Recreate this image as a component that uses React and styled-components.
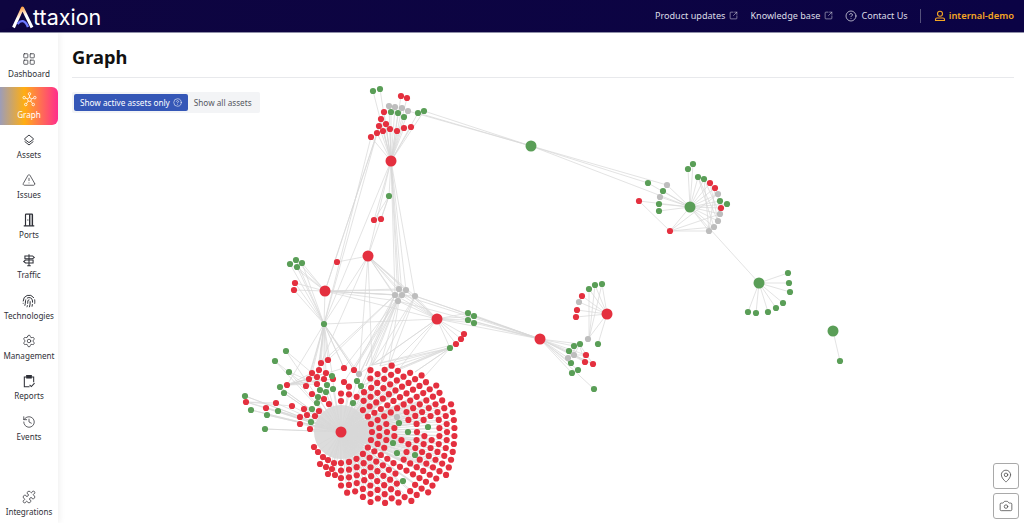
import React from 'react';
import styled, { createGlobalStyle } from 'styled-components';
import {
  LayoutGrid, TriangleAlert, Fingerprint, Settings,
  History, Puzzle, SquareArrowOutUpRight, CircleHelp, MapPin, Camera,
} from 'lucide-react';

const GlobalStyle = createGlobalStyle`
  html, body {
    margin: 0;
    padding: 0;
    height: 100%;
    background: #fff;
    font-family: "Noto Sans", "Liberation Sans", sans-serif;
  }
  #root { height: 100%; }
`;

const Page = styled.div`
  display: flex;
  flex-direction: column;
  width: 1024px;
  height: 523px;
  overflow: hidden;
`;

const Header = styled.header`
  display: flex;
  align-items: center;
  justify-content: space-between;
  flex: 0 0 33px;
  box-sizing: border-box;
  padding: 0 10px 1px 12px;
  background: linear-gradient(90deg, #0e0540, #0b0345);
  border-bottom: 1px solid #8f8fa8;
`;

const Logo = styled.div`
  display: flex;
  align-items: flex-end;
  height: 24px;
  margin-top: 2px;
  color: #fff;
`;

const LogoText = styled.span`
  font-family: "Inter", "Liberation Sans", sans-serif;
  font-size: 21.5px;
  line-height: 24px;
  margin-left: -1px;
`;

const TopNav = styled.nav`
  display: flex;
  align-items: center;
`;

const TopLink = styled.a`
  display: flex;
  align-items: center;
  gap: 4px;
  margin-right: ${(p) => p.$gap || 12}px;
  font-size: 9.1px;
  color: #dcdce6;
  white-space: nowrap;
`;

const Divider = styled.span`
  width: 1px;
  height: 14px;
  margin: 0 13px 0 11px;
  background: #55517c;
`;

const UserLink = styled.a`
  display: flex;
  align-items: center;
  gap: 3px;
  font-size: 9.4px;
  font-weight: 600;
  color: #f5a623;
`;

const Body = styled.div`
  display: flex;
  flex: 1;
  min-height: 0;
`;

const Sidebar = styled.aside`
  display: flex;
  flex-direction: column;
  align-items: stretch;
  flex: 0 0 58px;
  box-sizing: border-box;
  padding: 14px 0 0;
  background: #fff;
  box-shadow: 2px 0 6px rgba(0, 0, 0, 0.06);
  z-index: 1;
`;

const NavItem = styled.a`
  display: flex;
  flex-direction: column;
  align-items: center;
  justify-content: center;
  flex: 0 0 38px;
  margin-bottom: ${(p) => (p.$bottom ? '0' : '2.3px')};
  margin-top: ${(p) => (p.$bottom ? 'auto' : '0')};
  font-size: 8.1px;
  line-height: 12px;
  color: ${(p) => (p.$active ? '#fff' : '#2f3138')};
  border-radius: 0 6px 6px 0;
  background: ${(p) => (p.$active ? 'linear-gradient(90deg, #9d9db8 0%, #ffae12 42%, #ff8a3c 58%, #ff2d8c 100%)' : 'none')};
  svg { margin-bottom: 2px; }
`;

const Main = styled.main`
  position: relative;
  flex: 1;
  min-width: 0;
  box-sizing: border-box;
  padding: 0 10px 0 14px;
`;

const TitleBar = styled.div`
  height: 44px;
  border-bottom: 1px solid #e8e9ec;
`;

const Title = styled.h1`
  margin: 0;
  padding-top: 9px;
  font-size: 18.3px;
  line-height: 30px;
  font-weight: 700;
  color: #111;
`;

const Toggle = styled.div`
  position: relative;
  z-index: 1;
  display: inline-flex;
  align-items: center;
  margin-top: 14px;
  padding: 2px;
  height: 21px;
  box-sizing: border-box;
  background: #f3f4f6;
  border-radius: 2px;
`;

const ToggleButton = styled.button`
  display: flex;
  align-items: center;
  gap: 3px;
  height: 17px;
  padding: 0 6px;
  border: none;
  border-radius: 2px;
  font-family: inherit;
  font-size: 8.2px;
  color: ${(p) => (p.$active ? '#fff' : '#55585f')};
  background: ${(p) => (p.$active ? '#3557b7' : 'transparent')};
`;

const GraphCanvas = styled.svg`
  position: absolute;
  left: 0;
  top: 0;
  width: 966px;
  height: 490px;
`;

const MapTools = styled.div`
  position: absolute;
  right: 5px;
  bottom: 4px;
  display: flex;
  flex-direction: column;
  gap: 4px;
`;

const MapTool = styled.button`
  display: flex;
  align-items: center;
  justify-content: center;
  width: 26px;
  height: 26px;
  padding: 0;
  background: #fff;
  border: 1px solid #a9a9a9;
  border-radius: 3px;
  color: #444;
`;

const RED = '#e4303f';
const GREEN = '#5a9e57';
const GREY = '#bdbdbd';

const topReds = [[401,96],[407,98],[384,112],[381,119],[379,126],[386,124],[377,133],[371,137],[383,131],[390,129],[397,131],[404,128],[411,127]];
const topGreens = [[373,91],[380,89],[391,112],[398,113],[404,117],[418,113],[424,111]];
const topGreys = [[389,106],[395,107],[402,108],[408,111]];

const rightReds = [[710,183],[715,188],[721,208],[670,231],[639,201]];
const rightGreens = [[693,164],[688,169],[698,177],[704,179],[720,201],[727,204],[648,183],[663,191],[659,204],[659,211]];
const rightGreys = [[718,194],[720,214],[718,221],[714,227],[709,231],[667,185],[660,197]];

const fanGreens = [[788,273],[789,283],[790,292],[783,303],[776,308],[768,312],[756,313],[748,312]];

const midGreys = [[399,289],[406,290],[395,295],[402,295],[398,301],[415,296]];
const leftTopGreens = [[290,264],[296,260],[302,263],[297,267]];
const leftTopReds = [[295,283],[294,290]];
const midGreens = [[468,313],[474,316],[468,320],[474,323],[450,348]];
const midReds = [[464,334],[461,339],[456,344]];

const lowerA = [[602,284],[595,285],[589,289],[598,344]];
const lowerARed = [[582,296],[577,310],[576,317]];
const lowerAGrey = [[579,302],[588,339]];
const lowerB = [[580,344],[574,346],[569,351],[571,363],[578,370],[572,373],[594,389]];
const lowerBRed = [[586,355],[585,362],[593,364]];
const lowerBGrey = [[574,355],[568,358]];

const leftGreens = [[286,351],[275,361],[289,372],[280,387],[284,393],[245,396],[251,410],[267,415],[278,411],[265,429],[332,376],[327,385],[320,390],[326,392],[333,389],[318,397],[317,403],[312,409],[311,422],[353,403],[357,381],[361,386]];
const leftReds = [[321,363],[328,360],[344,368],[354,370],[312,373],[319,370],[326,373],[317,377],[309,379],[324,379],[333,379],[306,386],[317,384],[287,385],[344,382],[312,394],[324,399],[329,404],[266,408],[246,402],[276,403],[292,406],[304,409],[307,415],[300,417],[315,416],[319,411],[300,424],[310,429],[314,447],[318,452],[323,457],[328,460],[320,464],[326,467],[334,463],[332,469],[328,474],[335,475]];
const clusterGreens = [[399,423],[408,432],[428,427],[393,443],[397,453],[415,455],[403,481]];
const clusterGreys = [[359,374],[397,417]];

const HUB = [341, 432];
const DISC = [388, 436];

// rings around the hub, clipped to the disc of the big cluster
const buildRings = () => {
  const taken = [...leftGreens, ...leftReds, ...clusterGreens, ...clusterGreys];
  const dots = [];
  for (let k = 0; k < 24; k++) {
    const r = 31 + k * 7.5;
    const count = Math.floor((2 * Math.PI * r) / 8);
    for (let i = 0; i < count; i++) {
      const a = ((i + (k % 2) * 0.5) / count) * 2 * Math.PI;
      const x = HUB[0] + r * Math.cos(a);
      const y = HUB[1] + r * Math.sin(a);
      if (Math.hypot(x - DISC[0], y - DISC[1]) > 71) continue;
      if (taken.some(([tx, ty]) => Math.hypot(tx - x, ty - y) < 6.5)) continue;
      dots.push([x, y]);
    }
  }
  return dots;
};

const ringDots = buildRings();

const fan = (hub, list) => list.map((p) => [hub, p]);
const T = [391, 161];
const R = [690, 207];
const G1 = [531, 146];
const G2 = [759, 283];
const G3 = [833, 331];
const B1 = [368, 256];
const B2 = [325, 291];
const B3 = [437, 319];
const B4 = [607, 314];
const B5 = [540, 339];
const N = [324, 324];

const topAll = [...topReds, ...topGreens, ...topGreys];
const rightAll = [...rightReds, ...rightGreens, ...rightGreys];
const lowerLeft = [...leftReds, ...leftGreens];

const edges = [
  ...fan(T, topAll),
  ...fan(R, rightAll),
  ...fan(G2, fanGreens),
  [G3, [840, 361]],
  [G1, [424, 111]], [G1, [418, 113]], [G1, [408, 111]], [G1, R], [G1, [648, 183]], [G1, [667, 185]],
  [[639, 201], [670, 231]], [[670, 231], [718, 194]], [[670, 231], [720, 214]], [[670, 231], [714, 227]], [[670, 231], [709, 231]],
  [[704, 179], [720, 214]], [[710, 183], [718, 221]], [[698, 177], [714, 227]], [[715, 188], [709, 231]], [[704, 179], [709, 231]],
  [[710, 183], [720, 201]], [[698, 177], [718, 221]],
  [R, G2],
  ...fan(T, midGreys), [T, [389, 196]], [[389, 196], [374, 220]], [[389, 196], [381, 219]], [T, [374, 220]],
  [[377, 133], B2], [[371, 137], N], [[384, 112], B2], [[381, 119], N], [[389, 196], B1], [T, B1], [T, N],
  [B1, [337, 262]], [B1, N], ...fan(B1, midGreys), [B1, B3],
  ...fan(B2, leftTopGreens), ...fan(B2, leftTopReds), ...fan(B2, midGreys), [B2, N], [B2, B3],
  ...fan(N, leftTopGreens), ...fan(N, leftTopReds), [N, B3], [N, [359, 374]], [N, [344, 368]], [N, [354, 370]],
  ...fan(B3, midGreys), ...fan(B3, midGreens), ...fan(B3, midReds),
  ...fan(B5, midGreys.slice(3)), ...fan(B5, midGreens.slice(0, 4)), [B5, [415, 296]], [B5, B3],
  ...fan(N, leftReds.slice(0, 14)),
  ...fan([400, 295], [[359, 374], [344, 368], [354, 370], [366, 366], [372, 365], [380, 366], [388, 368], [344, 382], [361, 386]]),
  ...fan([395, 295], [[357, 381], [354, 370], [328, 360], [321, 363], [366, 366]]),
  ...fan(B1, [[359, 374], [372, 365], [321, 363]]),
  ...fan([415, 296], [[372, 365], [388, 368], [380, 366]]),
  ...fan([450, 348], [[372, 365], [388, 368], [400, 368], [415, 372], [425, 376], [380, 366], [361, 386]]),
  ...fan([456, 344], [[400, 368], [372, 365], [415, 372]]),
  ...fan(B3, [[372, 365], [388, 368], [400, 368], [359, 374]]),
  ...fan(B4, [...lowerA, ...lowerARed, ...lowerAGrey]),
  ...fan([589, 339], [[602, 284], [595, 285], [589, 289]]),
  ...fan(B5, [...lowerB, ...lowerBRed, ...lowerBGrey]),
  ...fan([574, 355], [[586, 355], [585, 362], [593, 364], [580, 344], [574, 346]]),
  ...fan([579, 344], [[593, 364], [585, 362], [568, 358]]),
  ...fan([287, 385], [[312, 373], [317, 377], [309, 379], [324, 379], [333, 379], [344, 368], [326, 373], [317, 384]]),
  ...fan(HUB, [[266, 408], [246, 402], [245, 396], [251, 410], [267, 415], [276, 403], [278, 411], [265, 429], [292, 406], [300, 417], [300, 424], [304, 409], [307, 415], [310, 429], [315, 416], [319, 411], [311, 422], [280, 387], [284, 393]]),
  [[286, 351], [312, 373]], [[275, 361], [306, 386]], [[289, 372], [317, 384]],
  ...fan([246, 402], [[300, 417], [292, 406], [276, 403]]),
  ...fan(HUB, ringDots),
  ...fan(HUB, lowerLeft.slice(28)),
];

const bigNodes = [
  { at: T, c: RED }, { at: R, c: GREEN }, { at: G1, c: GREEN }, { at: G2, c: GREEN }, { at: G3, c: GREEN },
  { at: B1, c: RED }, { at: B2, c: RED }, { at: B3, c: RED }, { at: B4, c: RED }, { at: B5, c: RED }, { at: HUB, c: RED },
];

const groups = [
  [RED, [...topReds, ...rightReds, ...leftTopReds, ...midReds, ...lowerARed, ...lowerBRed, ...leftReds, ...ringDots, [337, 262], [374, 220], [381, 219]]],
  [GREEN, [...topGreens, ...rightGreens, ...fanGreens, ...leftTopGreens, ...midGreens, ...lowerA, ...lowerB, ...leftGreens, ...clusterGreens, N, [389, 196], [840, 361]]],
  [GREY, [...topGreys, ...rightGreys, ...midGreys, ...lowerAGrey, ...lowerBGrey, ...clusterGreys]],
];

const LogoMark = () => (
  <svg width="22" height="24" viewBox="0 0 22 24" fill="none">
    <defs>
      <linearGradient id="logoA" x1="0.3" y1="0" x2="0.7" y2="1">
        <stop offset="0" stopColor="#ff9a3c" />
        <stop offset="0.45" stopColor="#ffffff" />
        <stop offset="1" stopColor="#ffffff" />
      </linearGradient>
    </defs>
    <path d="M1.5 22.5 L10.5 3 L20 22.5" stroke="url(#logoA)" strokeWidth="3" strokeLinejoin="round" />
    <path d="M5.5 19 C9 14.5 13 15 16 22" stroke="#6f7bff" strokeWidth="2.4" />
  </svg>
);

const Icon = styled.svg`
  display: block;
  fill: none;
  stroke: currentColor;
`;

const GraphIcon = () => (
  <Icon width="15" height="15" viewBox="0 0 24 24" strokeWidth="1.3">
    <circle cx="12" cy="12" r="3" />
    <circle cx="12" cy="3" r="2" />
    <circle cx="3.5" cy="9" r="2" />
    <circle cx="20.5" cy="9" r="2" />
    <circle cx="6" cy="20" r="2" />
    <circle cx="18" cy="20" r="2" />
    <path d="M12 5v4M5.4 9.8l3.8 1.2M18.6 9.8l-3.8 1.2M7.3 18.4l2.9-4M16.7 18.4l-2.9-4" />
  </Icon>
);

const AssetsIcon = () => (
  <Icon width="14" height="14" viewBox="0 0 24 24" strokeWidth="1.6">
    <path d="M12 3.5l7.5 6.2a.8.8 0 0 1 0 1.2L12 16.5l-7.5-5.6a.8.8 0 0 1 0-1.2z" />
    <path d="M4.5 14.5l7.5 6 7.5-6" />
  </Icon>
);

const DoorIcon = () => (
  <Icon width="14" height="14" viewBox="0 0 24 24" strokeWidth="2">
    <path d="M3 22h18M6 22V3a1 1 0 0 1 1-1h10a1 1 0 0 1 1 1v19" />
    <path d="M13 2h5v20h-5z" fill="currentColor" opacity="0.3" stroke="none" />
    <path d="M13 2v20M10 11v2" />
  </Icon>
);

const TrafficIcon = () => (
  <Icon width="14" height="14" viewBox="0 0 24 24" strokeWidth="1.8">
    <path d="M12 2v20M9 22h6" />
    <path d="M5 5h13l3 2.5L18 10H5z" />
    <path d="M19 12H6l-3 2.5L6 17h13z" />
  </Icon>
);

const ReportsIcon = () => (
  <Icon width="14" height="14" viewBox="0 0 24 24" strokeWidth="1.8">
    <path d="M7 5H4v17h9" />
    <path d="M17 5h3v9" />
    <path d="M8 2.5h8V7H8z" fill="currentColor" />
    <path d="M13 18.5l3 3 5.5-6" />
  </Icon>
);

const UserIcon = () => (
  <Icon width="12" height="12" viewBox="0 0 24 24" strokeWidth="2.2">
    <circle cx="12" cy="7.5" r="5" />
    <path d="M3 21v-2a3 3 0 0 1 3-3h12a3 3 0 0 1 3 3v2z" />
  </Icon>
);

const navItems = [
  { label: 'Dashboard', icon: <LayoutGrid size={14} strokeWidth={1.3} /> },
  { label: 'Graph', icon: <GraphIcon />, active: true },
  { label: 'Assets', icon: <AssetsIcon /> },
  { label: 'Issues', icon: <TriangleAlert size={14} strokeWidth={1.3} /> },
  { label: 'Ports', icon: <DoorIcon /> },
  { label: 'Traffic', icon: <TrafficIcon /> },
  { label: 'Technologies', icon: <Fingerprint size={14} strokeWidth={1.7} /> },
  { label: 'Management', icon: <Settings size={14} strokeWidth={1.3} /> },
  { label: 'Reports', icon: <ReportsIcon /> },
  { label: 'Events', icon: <History size={14} strokeWidth={1.3} /> },
];

const App = () => (
  <Page>
    <GlobalStyle />
    <Header>
      <Logo>
        <LogoMark />
        <LogoText>ttaxion</LogoText>
      </Logo>
      <TopNav>
        <TopLink>Product updates <SquareArrowOutUpRight size={9} strokeWidth={1.4} /></TopLink>
        <TopLink>Knowledge base <SquareArrowOutUpRight size={9} strokeWidth={1.4} /></TopLink>
        <TopLink $gap={1}><CircleHelp size={12} strokeWidth={1.5} /> Contact Us</TopLink>
        <Divider />
        <UserLink><UserIcon /> internal-demo</UserLink>
      </TopNav>
    </Header>
    <Body>
      <Sidebar>
        {navItems.map((item) => (
          <NavItem key={item.label} $active={item.active}>
            {item.icon}
            {item.label}
          </NavItem>
        ))}
        <NavItem $bottom>
          <Puzzle size={14} strokeWidth={1.3} />
          Integrations
        </NavItem>
      </Sidebar>
      <Main>
        <GraphCanvas viewBox="58 33 966 490">
          <circle cx={HUB[0]} cy={HUB[1]} r="27" fill="#dcdcdc" />
          <g stroke="#d8d8d8" strokeWidth="0.8" strokeOpacity="0.9">
            {edges.map(([a, b], i) => (
              <line key={i} x1={a[0]} y1={a[1]} x2={b[0]} y2={b[1]} />
            ))}
          </g>
          {groups.map(([color, list]) => (
            <g key={color} fill={color}>
              {list.map(([x, y], i) => (
                <circle key={i} cx={x} cy={y} r="3.1" />
              ))}
            </g>
          ))}
          {bigNodes.map(({ at, c }, i) => (
            <circle key={i} cx={at[0]} cy={at[1]} r="5.5" fill={c} />
          ))}
        </GraphCanvas>
        <TitleBar>
          <Title>Graph</Title>
        </TitleBar>
        <Toggle>
          <ToggleButton $active>Show active assets only <CircleHelp size={9} strokeWidth={1.5} /></ToggleButton>
          <ToggleButton>Show all assets</ToggleButton>
        </Toggle>
        <MapTools>
          <MapTool><MapPin size={14} strokeWidth={1.3} /></MapTool>
          <MapTool><Camera size={14} strokeWidth={1.3} /></MapTool>
        </MapTools>
      </Main>
    </Body>
  </Page>
);

export default App;
